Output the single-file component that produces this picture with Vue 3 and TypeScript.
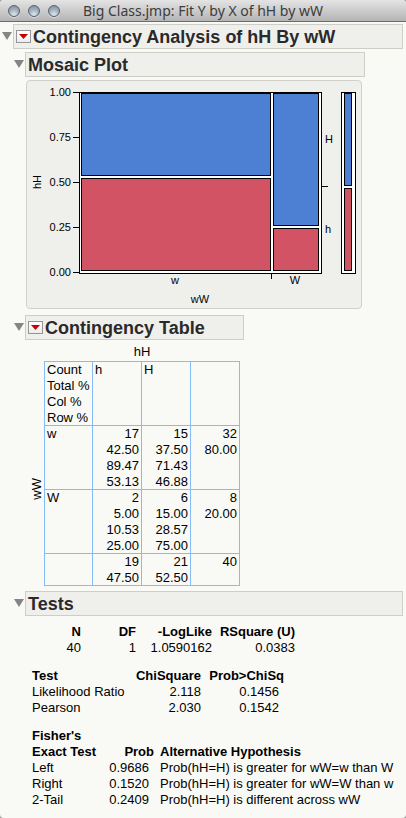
<script setup lang="ts">
interface ContingencyRow {
  label: string
  cells: string[][]
}
interface Tile {
  x: number
  y: number
  w: number
  h: number
  level: 'h' | 'H'
}

const measures: string[] = ['Count', 'Total %', 'Col %', 'Row %']
const rows: ContingencyRow[] = [
  {
    label: 'w',
    cells: [
      ['17', '42.50', '89.47', '53.13'],
      ['15', '37.50', '71.43', '46.88'],
      ['32', '80.00'],
    ],
  },
  {
    label: 'W',
    cells: [
      ['2', '5.00', '10.53', '25.00'],
      ['6', '15.00', '28.57', '75.00'],
      ['8', '20.00'],
    ],
  },
  {
    label: '',
    cells: [['19', '47.50'], ['21', '52.50'], ['40']],
  },
]

const ticks = [
  { label: '1.00', y: 11 },
  { label: '0.75', y: 56 },
  { label: '0.50', y: 101 },
  { label: '0.25', y: 146 },
  { label: '0.00', y: 191 },
]

const tiles: Tile[] = [
  { x: 54, y: 12, w: 189, h: 82, level: 'H' },
  { x: 54, y: 97, w: 189, h: 92, level: 'h' },
  { x: 246, y: 12, w: 45, h: 132, level: 'H' },
  { x: 246, y: 147, w: 45, h: 42, level: 'h' },
  { x: 317, y: 12, w: 7, h: 92, level: 'H' },
  { x: 317, y: 107, w: 7, h: 82, level: 'h' },
]

const tests = [
  { name: 'Likelihood Ratio', chi: '2.118', prob: '0.1456' },
  { name: 'Pearson', chi: '2.030', prob: '0.1542' },
]
const fisher = [
  { name: 'Left', prob: '0.9686', alt: 'Prob(hH=H) is greater for wW=w than W' },
  { name: 'Right', prob: '0.1520', alt: 'Prob(hH=H) is greater for wW=W than w' },
  { name: '2-Tail', prob: '0.2409', alt: 'Prob(hH=H) is different across wW' },
]
</script>

<template>
  <div class="window">
    <header class="titlebar">
      <div class="lights">
        <button class="light" type="button" aria-label="Close"></button>
        <button class="light" type="button" aria-label="Minimize"></button>
        <button class="light" type="button" aria-label="Zoom"></button>
      </div>
      <span class="title">Big Class.jmp: Fit Y by X of hH by wW</span>
    </header>

    <main class="report">
      <div class="outline">
        <button class="disclose" type="button" aria-label="Toggle analysis">
          <svg width="10" height="8" viewBox="0 0 10 8"><path d="M0 0H10L5 8Z" /></svg>
        </button>
        <div class="bar">
          <button class="menu" type="button" aria-label="Analysis options">
            <svg width="9" height="5" viewBox="0 0 9 5"><path d="M0 0H9L4.5 5Z" /></svg>
          </button>
          <h1>Contingency Analysis of hH By wW</h1>
        </div>
      </div>

      <section class="part fit">
        <div class="outline">
          <button class="disclose" type="button" aria-label="Toggle mosaic plot">
            <svg width="10" height="8" viewBox="0 0 10 8"><path d="M0 0H10L5 8Z" /></svg>
          </button>
          <div class="bar"><h2>Mosaic Plot</h2></div>
        </div>
        <div class="panel">
          <svg class="mosaic" width="334" height="227" viewBox="0 0 334 227" role="img" aria-label="Mosaic plot of hH by wW">
            <rect class="frame" x="52.5" y="11.5" width="242" height="181" />
            <rect class="frame" x="314.5" y="11.5" width="14" height="181" />
            <rect
              v-for="(t, i) in tiles"
              :key="i"
              :class="t.level === 'H' ? 'tile upper' : 'tile lower'"
              :x="t.x + 0.5"
              :y="t.y + 0.5"
              :width="t.w"
              :height="t.h"
            />
            <g v-for="t in ticks" :key="t.label">
              <path class="tick" :d="`M46 ${t.y + 0.5}H53`" />
              <text x="44" :y="t.y + 4" text-anchor="end">{{ t.label }}</text>
            </g>
            <path class="tick" d="M295 105.5H301M244.5 193V198" />
            <text x="298" y="62">H</text>
            <text x="298" y="152">h</text>
            <text x="148" y="203" text-anchor="middle">w</text>
            <text x="268" y="203" text-anchor="middle">W</text>
            <text x="173" y="222" text-anchor="middle">wW</text>
            <text transform="translate(14 101) rotate(-90)" text-anchor="middle">hH</text>
          </svg>
        </div>
      </section>

      <section class="part fit">
        <div class="outline">
          <button class="disclose" type="button" aria-label="Toggle contingency table">
            <svg width="10" height="8" viewBox="0 0 10 8"><path d="M0 0H10L5 8Z" /></svg>
          </button>
          <div class="bar">
            <button class="menu" type="button" aria-label="Table options">
              <svg width="9" height="5" viewBox="0 0 9 5"><path d="M0 0H9L4.5 5Z" /></svg>
            </button>
            <h2>Contingency Table</h2>
          </div>
        </div>
        <div class="crosstab">
          <div class="side"><span>wW</span></div>
          <table class="counts">
            <caption>hH</caption>
            <colgroup><col class="c48" /><col class="c49" /><col class="c49" /><col class="c49" /></colgroup>
            <thead>
              <tr>
                <th scope="col"><div v-for="m in measures" :key="m">{{ m }}</div></th>
                <th scope="col">h</th>
                <th scope="col">H</th>
                <th scope="col"></th>
              </tr>
            </thead>
            <tbody>
              <tr v-for="r in rows" :key="r.label">
                <th scope="row">{{ r.label }}</th>
                <td v-for="(c, i) in r.cells" :key="i">
                  <div v-for="l in c" :key="l">{{ l }}</div>
                </td>
              </tr>
            </tbody>
          </table>
        </div>
      </section>

      <section class="part">
        <div class="outline">
          <button class="disclose" type="button" aria-label="Toggle tests">
            <svg width="10" height="8" viewBox="0 0 10 8"><path d="M0 0H10L5 8Z" /></svg>
          </button>
          <div class="bar"><h2>Tests</h2></div>
        </div>
        <div class="results">
          <table class="summary">
            <colgroup><col class="c49" /><col class="c55" /><col class="c76" /><col class="c83" /></colgroup>
            <thead>
              <tr><th scope="col">N</th><th scope="col">DF</th><th scope="col">-LogLike</th><th scope="col">RSquare (U)</th></tr>
            </thead>
            <tbody>
              <tr><td>40</td><td>1</td><td>1.0590162</td><td>0.0383</td></tr>
            </tbody>
          </table>

          <table class="chi">
            <colgroup><col class="c93" /><col class="c76" /><col class="c83" /></colgroup>
            <thead>
              <tr><th scope="col" class="text">Test</th><th scope="col">ChiSquare</th><th scope="col">Prob&gt;ChiSq</th></tr>
            </thead>
            <tbody>
              <tr v-for="t in tests" :key="t.name">
                <td class="text">{{ t.name }}</td><td>{{ t.chi }}</td><td class="prob">{{ t.prob }}</td>
              </tr>
            </tbody>
          </table>

          <table class="fisher">
            <colgroup><col class="c66" /><col class="c56" /><col /></colgroup>
            <thead>
              <tr>
                <th scope="col" class="text">Fisher's<br />Exact Test</th>
                <th scope="col">Prob</th>
                <th scope="col" class="text alt">Alternative Hypothesis</th>
              </tr>
            </thead>
            <tbody>
              <tr v-for="f in fisher" :key="f.name">
                <td class="text">{{ f.name }}</td><td class="prob">{{ f.prob }}</td><td class="text alt">{{ f.alt }}</td>
              </tr>
            </tbody>
          </table>
        </div>
      </section>
    </main>
  </div>
</template>

<style>
html {
  background: #a4a4a2;
}
body {
  margin: 0;
}
</style>

<style scoped>
.window {
  box-sizing: border-box;
  min-height: 100vh;
  overflow: hidden;
  border-radius: 4px;
  background: #f9faf5;
  color: #000;
  font: 13px/16px "Liberation Sans", Arial, Helvetica, sans-serif;
}
.titlebar {
  display: grid;
  grid-template-columns: 1fr auto 1fr;
  align-items: center;
  box-sizing: border-box;
  height: 22px;
  border-bottom: 1px solid #6c6c6c;
  background: linear-gradient(#e4e4e4, #b4b4b4);
}
.lights {
  display: flex;
  gap: 8px;
  padding-left: 8px;
}
button {
  display: flex;
  align-items: center;
  justify-content: center;
  margin: 0;
  padding: 0;
  border: 0;
  background: none;
}
.light {
  width: 12px;
  height: 12px;
  border: 1px solid #566270;
  border-radius: 50%;
  background: radial-gradient(circle at 50% 85%, #dde8f0 0, #a3b1be 50%, #7d8c9a 100%);
  box-shadow: 0 1px 0 #dedede;
}
.title {
  color: #3c3c3c;
  font: 14px/20px "Noto Sans", "Open Sans", sans-serif;
  white-space: nowrap;
}
.report {
  display: flex;
  flex-direction: column;
  padding: 2px 3px 8px 0;
}
.outline {
  display: flex;
}
.disclose {
  width: 13px;
  height: 25px;
  flex: none;
  fill: #858585;
}
.disclose svg {
  margin-bottom: 2px;
}
.bar {
  display: flex;
  flex: 1;
  align-items: center;
  gap: 2px;
  box-sizing: border-box;
  height: 25px;
  padding-left: 2px;
  border: 1px solid #cdcec6;
  background: #efefeb;
}
h1,
h2 {
  margin: 0;
  color: #2a2a2a;
  font-size: 18px;
  line-height: 22px;
  font-weight: bold;
  white-space: nowrap;
}
.menu {
  box-sizing: border-box;
  width: 15px;
  height: 13px;
  border: 1px solid #969696;
  background: linear-gradient(#fff, #ececec);
  fill: #c80000;
}
.part {
  padding: 3px 0 0 12px;
}
.fit {
  width: fit-content;
}
.panel {
  margin: 3px 3px 3px 14px;
  border: 1px solid #d0d1cb;
  border-radius: 4px;
  background: #efefeb;
}
.mosaic {
  display: block;
  font-size: 11px;
}
.frame {
  fill: #fff;
  stroke: #000;
}
.tile {
  stroke: #000;
}
.upper {
  fill: #4d7fd3;
}
.lower {
  fill: #d25464;
}
.tick {
  stroke: #000;
}
.crosstab {
  display: flex;
  margin: 4px 4px 2px 18px;
}
.side {
  display: flex;
  align-items: center;
  width: 14px;
  padding-top: 48px;
  line-height: 14px;
}
.side span {
  writing-mode: vertical-rl;
  transform: rotate(180deg);
}
table {
  border-spacing: 0;
}
th,
td {
  padding: 0;
  vertical-align: top;
  text-align: right;
  white-space: nowrap;
}
.counts {
  table-layout: fixed;
  width: 196px;
  border-top: 1px solid #84bdf5;
  border-right: 1px solid #84bdf5;
}
.counts caption {
  height: 17px;
}
.counts th,
.counts td {
  height: 16px;
  padding: 0 2px 0 3px;
  box-shadow: inset 1px -1px #84bdf5;
}
.counts th {
  padding-right: 0;
  font-weight: normal;
  text-align: left;
}
.results {
  display: flex;
  flex-direction: column;
  gap: 12px;
  padding: 8px 0 0 20px;
}
.results table {
  table-layout: fixed;
}
.summary {
  width: 263px;
}
.chi {
  width: 252px;
}
.fisher {
  width: 100%;
}
.fisher th {
  vertical-align: bottom;
}
.c48 {
  width: 48px;
}
.c49 {
  width: 49px;
}
.c55 {
  width: 55px;
}
.c56 {
  width: 56px;
}
.c66 {
  width: 66px;
}
.c76 {
  width: 76px;
}
.c83 {
  width: 83px;
}
.c93 {
  width: 93px;
}
.results .text {
  text-align: left;
}
.results .alt {
  padding-left: 6px;
}
.results .prob {
  padding-right: 5px;
}
</style>
